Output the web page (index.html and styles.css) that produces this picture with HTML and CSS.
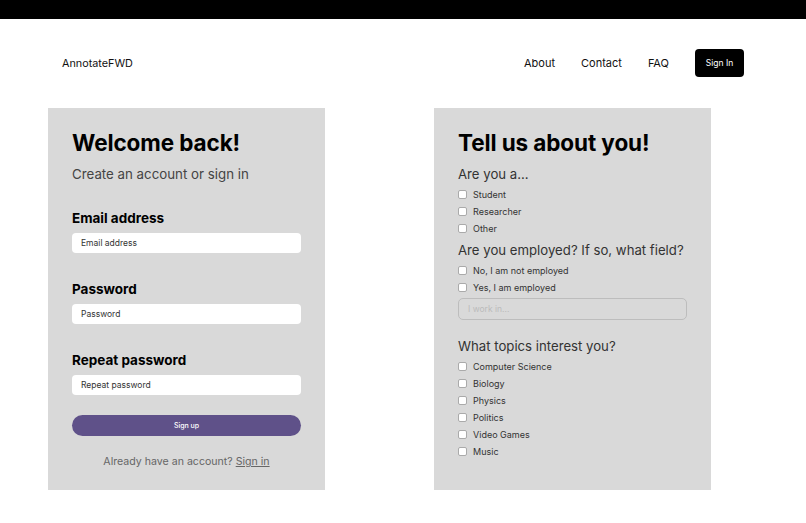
FILE: index.html
```html
<!DOCTYPE html>
<html>
<head>
<meta charset="utf-8">
<link rel="stylesheet" href="styles.css">
</head>
<body>
<div class="topbar"></div>
<header class="header">
  <div class="logo">AnnotateFWD</div>
  <nav class="nav">
    <a class="nav-link">About</a>
    <a class="nav-link">Contact</a>
    <a class="nav-link">FAQ</a>
    <button class="nav-btn">Sign In</button>
  </nav>
</header>
<main class="main">
  <section class="card">
    <h1 class="title">Welcome back!</h1>
    <p class="subtitle">Create an account or sign in</p>
    <div class="field">
      <label class="label">Email address</label>
      <div class="input">Email address</div>
    </div>
    <div class="field">
      <label class="label">Password</label>
      <div class="input">Password</div>
    </div>
    <div class="field">
      <label class="label">Repeat password</label>
      <div class="input">Repeat password</div>
    </div>
    <button class="signup">Sign up</button>
    <p class="already">Already have an account? <a class="link">Sign in</a></p>
  </section>
  <section class="card">
    <h1 class="title">Tell us about you!</h1>
    <h2 class="question">Are you a...</h2>
    <ul class="checks">
      <li class="check"><span class="box"></span>Student</li>
      <li class="check"><span class="box"></span>Researcher</li>
      <li class="check"><span class="box"></span>Other</li>
    </ul>
    <h2 class="question">Are you employed? If so, what field?</h2>
    <ul class="checks">
      <li class="check"><span class="box"></span>No, I am not employed</li>
      <li class="check"><span class="box"></span>Yes, I am employed</li>
    </ul>
    <div class="work">I work in...</div>
    <h2 class="question q-topics">What topics interest you?</h2>
    <ul class="checks">
      <li class="check"><span class="box"></span>Computer Science</li>
      <li class="check"><span class="box"></span>Biology</li>
      <li class="check"><span class="box"></span>Physics</li>
      <li class="check"><span class="box"></span>Politics</li>
      <li class="check"><span class="box"></span>Video Games</li>
      <li class="check"><span class="box"></span>Music</li>
    </ul>
  </section>
</main>
</body>
</html>
```
FILE: styles.css
```css
* { box-sizing: border-box; }
html, body { margin: 0; padding: 0; background: #fff; }
body { font-family: Inter, "Noto Sans", sans-serif; color: #111; width: 806px; height: 523px; overflow: hidden; }

.topbar { height: 19px; background: #000; }

.header {
  display: flex; align-items: center; justify-content: space-between;
  padding: 30px 62px 31px 62px;
}
.logo { font-size: 10.8px; color: #111; }
.nav { display: flex; align-items: center; }
.nav-link { font-size: 11px; color: #111; margin-right: 26px; }
.nav-btn {
  background: #000; color: #fff; border: none; border-radius: 4px;
  font-family: inherit; font-size: 8.5px; height: 28px; width: 49px; padding: 0;
}

.main { display: flex; gap: 109px; padding-left: 48px; }
.card {
  width: 277px; height: 382px; background: #d9d9d9;
  padding: 20px 24px 0 24px;
}
.title { font-size: 22.5px; font-weight: 700; margin: 0; line-height: 29px; color: #000; letter-spacing: -0.1px; }
.subtitle { font-size: 13.3px; color: #444; margin: 8px 0 0 0; line-height: 18px; }

.field { margin-top: 27px; }
.field + .field { margin-top: 28px; }
.label { display: block; font-size: 13.5px; font-weight: 700; line-height: 17px; color: #000; }
.input {
  margin-top: 6px; height: 20px; background: #fff; border-radius: 4px;
  font-size: 8.5px; color: #333; padding-left: 9px; line-height: 20px;
}
.signup {
  display: block; margin-top: 20px; width: 229px; height: 21px;
  background: #5f5189; color: #fff; border: none; border-radius: 11px;
  font-family: inherit; font-size: 7px; font-weight: 500;
}
.already { text-align: center; font-size: 10.6px; color: #666; margin: 19px 0 0 0; line-height: 14px; }
.link { text-decoration: underline; color: #666; }

.question { font-size: 13.2px; font-weight: 400; color: #333; margin: 8px 0 0 0; line-height: 18px; }
.checks { list-style: none; margin: 3px 0 0 0; padding: 0; }
.check { display: flex; align-items: center; height: 17px; font-size: 9px; color: #333; }
.box {
  width: 9px; height: 9px; background: #fff; border: 1px solid #aaa;
  border-radius: 2px; margin-right: 6px;
}
.checks + .question { margin-top: 4px; }
.work {
  margin-top: 2px; height: 22px; width: 229px; border: 1px solid #bdbdbd;
  border-radius: 5px; font-size: 8.5px; color: #bbb; padding-left: 9px; line-height: 20px;
}
.question.q-topics { margin-top: 17px; }
```
